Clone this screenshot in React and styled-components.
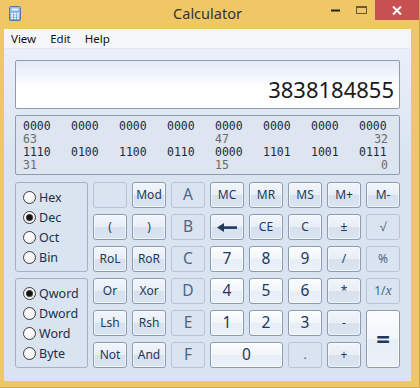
import React from 'react';
import styled, { createGlobalStyle, css } from 'styled-components';

const GlobalStyle = createGlobalStyle`
  html, body {
    margin: 0;
    padding: 0;
    background: #f0c766;
  }
  * {
    box-sizing: border-box;
  }
`;

const Window = styled.div`
  width: 420px;
  height: 388px;
  display: flex;
  flex-direction: column;
  background: #f0c766;
  border-right: 1px solid #d2a448;
  border-bottom: 1px solid #d2a448;
  padding: 0 8px 6px 4px;
  font-family: 'Noto Sans', 'Open Sans', sans-serif;
  color: #1e395b;
`;

const TitleBar = styled.div`
  height: 29px;
  display: flex;
  align-items: flex-start;
  position: relative;
  flex-shrink: 0;
`;

const AppIcon = styled.svg`
  margin: 6px 0 0 5px;
`;

const Title = styled.div`
  position: absolute;
  left: 0;
  right: 0;
  top: 3px;
  text-align: center;
  font-size: 14.5px;
  color: #333;
  pointer-events: none;
`;

const Controls = styled.div`
  margin-left: auto;
  display: flex;
  align-items: flex-start;
  margin-right: -8px;
`;

const CtrlButton = styled.div`
  width: ${(p) => p.$w}px;
  height: 20px;
  display: flex;
  align-items: center;
  justify-content: center;
  background: ${(p) => (p.$close ? '#c75050' : 'transparent')};
`;

const Client = styled.div`
  flex: 1;
  display: flex;
  flex-direction: column;
  background: linear-gradient(#edf2fa 0, #dae4f0 130px);
`;

const MenuBar = styled.div`
  height: 20px;
  background: #f5f6f7;
  border-bottom: 1px solid #e4e8ee;
  display: flex;
  align-items: center;
  padding-left: 7px;
  gap: 14px;
  font-size: 11.5px;
  color: #111;
`;

const Content = styled.div`
  padding: 11px 11px 0 11px;
  display: flex;
  flex-direction: column;
`;

const Display = styled.div`
  height: 49px;
  border: 1px solid #8e9cb0;
  border-radius: 2px;
  background: linear-gradient(#e3ebf7 0%, #f1f5fc 30%, #ffffff 55%);
  display: flex;
  align-items: flex-end;
  justify-content: flex-end;
  padding: 0 5px 4px 0;
  font-size: 22px;
  line-height: 30px;
  color: #1a1a1a;
  margin-bottom: 6px;
`;

const BitPanel = styled.div`
  height: 60px;
  border: 1px solid #8e9cb0;
  border-radius: 2px;
  background: #dce5f0;
  padding: 4px 0 0 7px;
  display: grid;
  grid-template-columns: repeat(7, 48px) 29px;
  grid-auto-rows: 13px;
  font-family: 'DejaVu Sans Mono', 'Liberation Mono', monospace;
  font-size: 11.5px;
  line-height: 13px;
  margin-bottom: 7px;
`;

const Bits = styled.span`
  color: #1c2a3c;
`;

const BitLabel = styled.span`
  color: #6b6b6b;
  text-align: ${(p) => (p.$right ? 'right' : 'left')};
  grid-column: ${(p) => p.$col};
`;

const Keypad = styled.div`
  display: flex;
  gap: 5px;
`;

const Groups = styled.div`
  display: flex;
  flex-direction: column;
  gap: 6px;
`;

const GroupBox = styled.div`
  width: 73px;
  height: 90px;
  border: 1px solid #a3b1c4;
  border-radius: 3px;
  padding: 4px 0 0 7px;
  display: flex;
  flex-direction: column;
`;

const RadioRow = styled.label`
  height: 20px;
  display: flex;
  align-items: center;
  gap: 3px;
  font-size: 12.5px;
  color: #1e2f48;
`;

const RadioDot = styled.span`
  width: 13px;
  height: 13px;
  border-radius: 50%;
  border: 1px solid #3c3c3c;
  background: radial-gradient(circle at 40% 35%, #ffffff 0%, #f4f4f4 60%, #dcdcdc 100%);
  display: flex;
  align-items: center;
  justify-content: center;
  &::after {
    content: '';
    width: 5px;
    height: 5px;
    border-radius: 50%;
    background: ${(p) => (p.$on ? '#111' : 'transparent')};
    box-shadow: ${(p) => (p.$on ? '0 0 0 1px #3a3a3a' : 'none')};
  }
`;

const Grid = styled.div`
  display: grid;
  grid-template-columns: repeat(8, 34px);
  grid-template-rows: repeat(6, 26px);
  column-gap: 5px;
  row-gap: 6px;
`;

const kinds = {
  op: css`
    border-color: #8b9bb0;
    background: linear-gradient(#f2f6fb 0%, #e8eef6 50%, #d7e1ee 51%, #dbe5f1 100%);
    font-size: 12px;
  `,
  num: css`
    border-color: #8b9bb0;
    background: linear-gradient(#fcfdfe 0%, #f2f6fa 50%, #e7eef6 51%, #ebf1f8 100%);
    font-size: 15.5px;
  `,
  off: css`
    border-color: #b8c4d4;
    background: transparent;
    box-shadow: none;
    color: #4d6583;
    font-size: 12px;
  `,
};

const Key = styled.div`
  border: 1px solid;
  border-radius: 3px;
  display: flex;
  align-items: center;
  justify-content: center;
  box-shadow: inset 0 0 0 1px rgba(255, 255, 255, 0.55);
  color: #1e395b;
  line-height: 1;
  grid-column: span ${(p) => p.$cols || 1};
  grid-row: span ${(p) => p.$rows || 1};
  ${(p) => kinds[p.$kind]}
  ${(p) => p.$big && css`font-size: 15.5px;`}
  ${(p) => p.$eq && css`font-size: 24px; font-weight: 700;`}
`;

const Italic = styled.i`
  font-family: 'Liberation Serif', serif;
  font-size: 14px;
`;

const CalcIcon = () => (
  <AppIcon width="12" height="15" viewBox="0 0 12 15">
    <defs>
      <linearGradient id="cg" x1="0" y1="0" x2="0" y2="1">
        <stop offset="0" stopColor="#b9d6f2" />
        <stop offset="1" stopColor="#6f9ccc" />
      </linearGradient>
    </defs>
    <rect x="0.5" y="0.5" width="11" height="14" rx="1" fill="url(#cg)" stroke="#4f79a8" />
    <rect x="2" y="2" width="8" height="3" fill="#eaf4fd" stroke="#5d87b5" strokeWidth="0.6" />
    {[0, 1, 2].map((r) =>
      [0, 1, 2].map((c) => (
        <rect key={`${r}${c}`} x={2 + c * 3} y={7 + r * 2.3} width="2" height="1.5" fill="#f5f9fd" />
      )),
    )}
  </AppIcon>
);

const BackArrow = () => (
  <svg width="20" height="9" viewBox="0 0 20 9">
    <path d="M0 4.5 L7 0 L7 9 Z" fill="#1e395b" />
    <rect x="6" y="3.3" width="14" height="2.6" fill="#1e395b" />
  </svg>
);

const keys = [
  ['', 'off'], ['Mod', 'op'], ['A', 'off', { $big: true }], ['MC', 'op'], ['MR', 'op'], ['MS', 'op'], ['M+', 'op'], ['M-', 'op'],
  ['(', 'op'], [')', 'op'], ['B', 'off', { $big: true }], ['back', 'op'], ['CE', 'op'], ['C', 'op'], ['±', 'op'], ['√', 'off'],
  ['RoL', 'op'], ['RoR', 'op'], ['C', 'off', { $big: true }], ['7', 'num'], ['8', 'num'], ['9', 'num'], ['/', 'op'], ['%', 'off'],
  ['Or', 'op'], ['Xor', 'op'], ['D', 'off', { $big: true }], ['4', 'num'], ['5', 'num'], ['6', 'num'], ['*', 'op'], ['1/x', 'off'],
  ['Lsh', 'op'], ['Rsh', 'op'], ['E', 'off', { $big: true }], ['1', 'num'], ['2', 'num'], ['3', 'num'], ['-', 'op'], ['=', 'num', { $rows: 2, $eq: true }],
  ['Not', 'op'], ['And', 'op'], ['F', 'off', { $big: true }], ['0', 'num', { $cols: 2 }], ['.', 'off'], ['+', 'op'],
];

const renderLabel = (label) => {
  if (label === 'back') return <BackArrow />;
  if (label === '1/x') return <span>1/<Italic>x</Italic></span>;
  return label;
};

const bitRows = [
  ['0000', '0000', '0000', '0000', '0000', '0000', '0000', '0000'],
  ['1110', '0100', '1100', '0110', '0000', '1101', '1001', '0111'],
];

const bitLabels = [
  ['63', '47', '32'],
  ['31', '15', '0'],
];

const App = () => {
  return (
    <>
      <GlobalStyle />
      <Window>
        <TitleBar>
          <CalcIcon />
          <Title>Calculator</Title>
          <Controls>
            <CtrlButton $w={26}>
              <svg width="9" height="3"><rect width="9" height="2" y="0.5" fill="#222" /></svg>
            </CtrlButton>
            <CtrlButton $w={27}>
              <svg width="11" height="8"><rect x="0.5" y="0.5" width="10" height="7" fill="none" stroke="#6b5a3a" /><rect x="0" y="0" width="11" height="2" fill="#6b5a3a" /></svg>
            </CtrlButton>
            <CtrlButton $w={44} $close>
              <svg width="10" height="9" viewBox="0 0 10 9">
                <path d="M1 0.5 L9 8.5 M9 0.5 L1 8.5" stroke="#fff" strokeWidth="2" />
              </svg>
            </CtrlButton>
          </Controls>
        </TitleBar>
        <Client>
          <MenuBar>
            <span>View</span>
            <span>Edit</span>
            <span>Help</span>
          </MenuBar>
          <Content>
            <Display>3838184855</Display>
            <BitPanel>
              {bitRows.map((row, i) => (
                <React.Fragment key={i}>
                  {row.map((b, j) => (
                    <Bits key={j}>{b}</Bits>
                  ))}
                  <BitLabel $col="1">{bitLabels[i][0]}</BitLabel>
                  <BitLabel $col="5">{bitLabels[i][1]}</BitLabel>
                  <BitLabel $col="8" $right>{bitLabels[i][2]}</BitLabel>
                </React.Fragment>
              ))}
            </BitPanel>
            <Keypad>
              <Groups>
                <GroupBox>
                  {['Hex', 'Dec', 'Oct', 'Bin'].map((r) => (
                    <RadioRow key={r}>
                      <RadioDot $on={r === 'Dec'} />
                      {r}
                    </RadioRow>
                  ))}
                </GroupBox>
                <GroupBox>
                  {['Qword', 'Dword', 'Word', 'Byte'].map((r) => (
                    <RadioRow key={r}>
                      <RadioDot $on={r === 'Qword'} />
                      {r}
                    </RadioRow>
                  ))}
                </GroupBox>
              </Groups>
              <Grid>
                {keys.map(([label, kind, extra], i) => (
                  <Key key={i} $kind={kind} {...extra}>
                    {renderLabel(label)}
                  </Key>
                ))}
              </Grid>
            </Keypad>
          </Content>
        </Client>
      </Window>
    </>
  );
};

export default App;
